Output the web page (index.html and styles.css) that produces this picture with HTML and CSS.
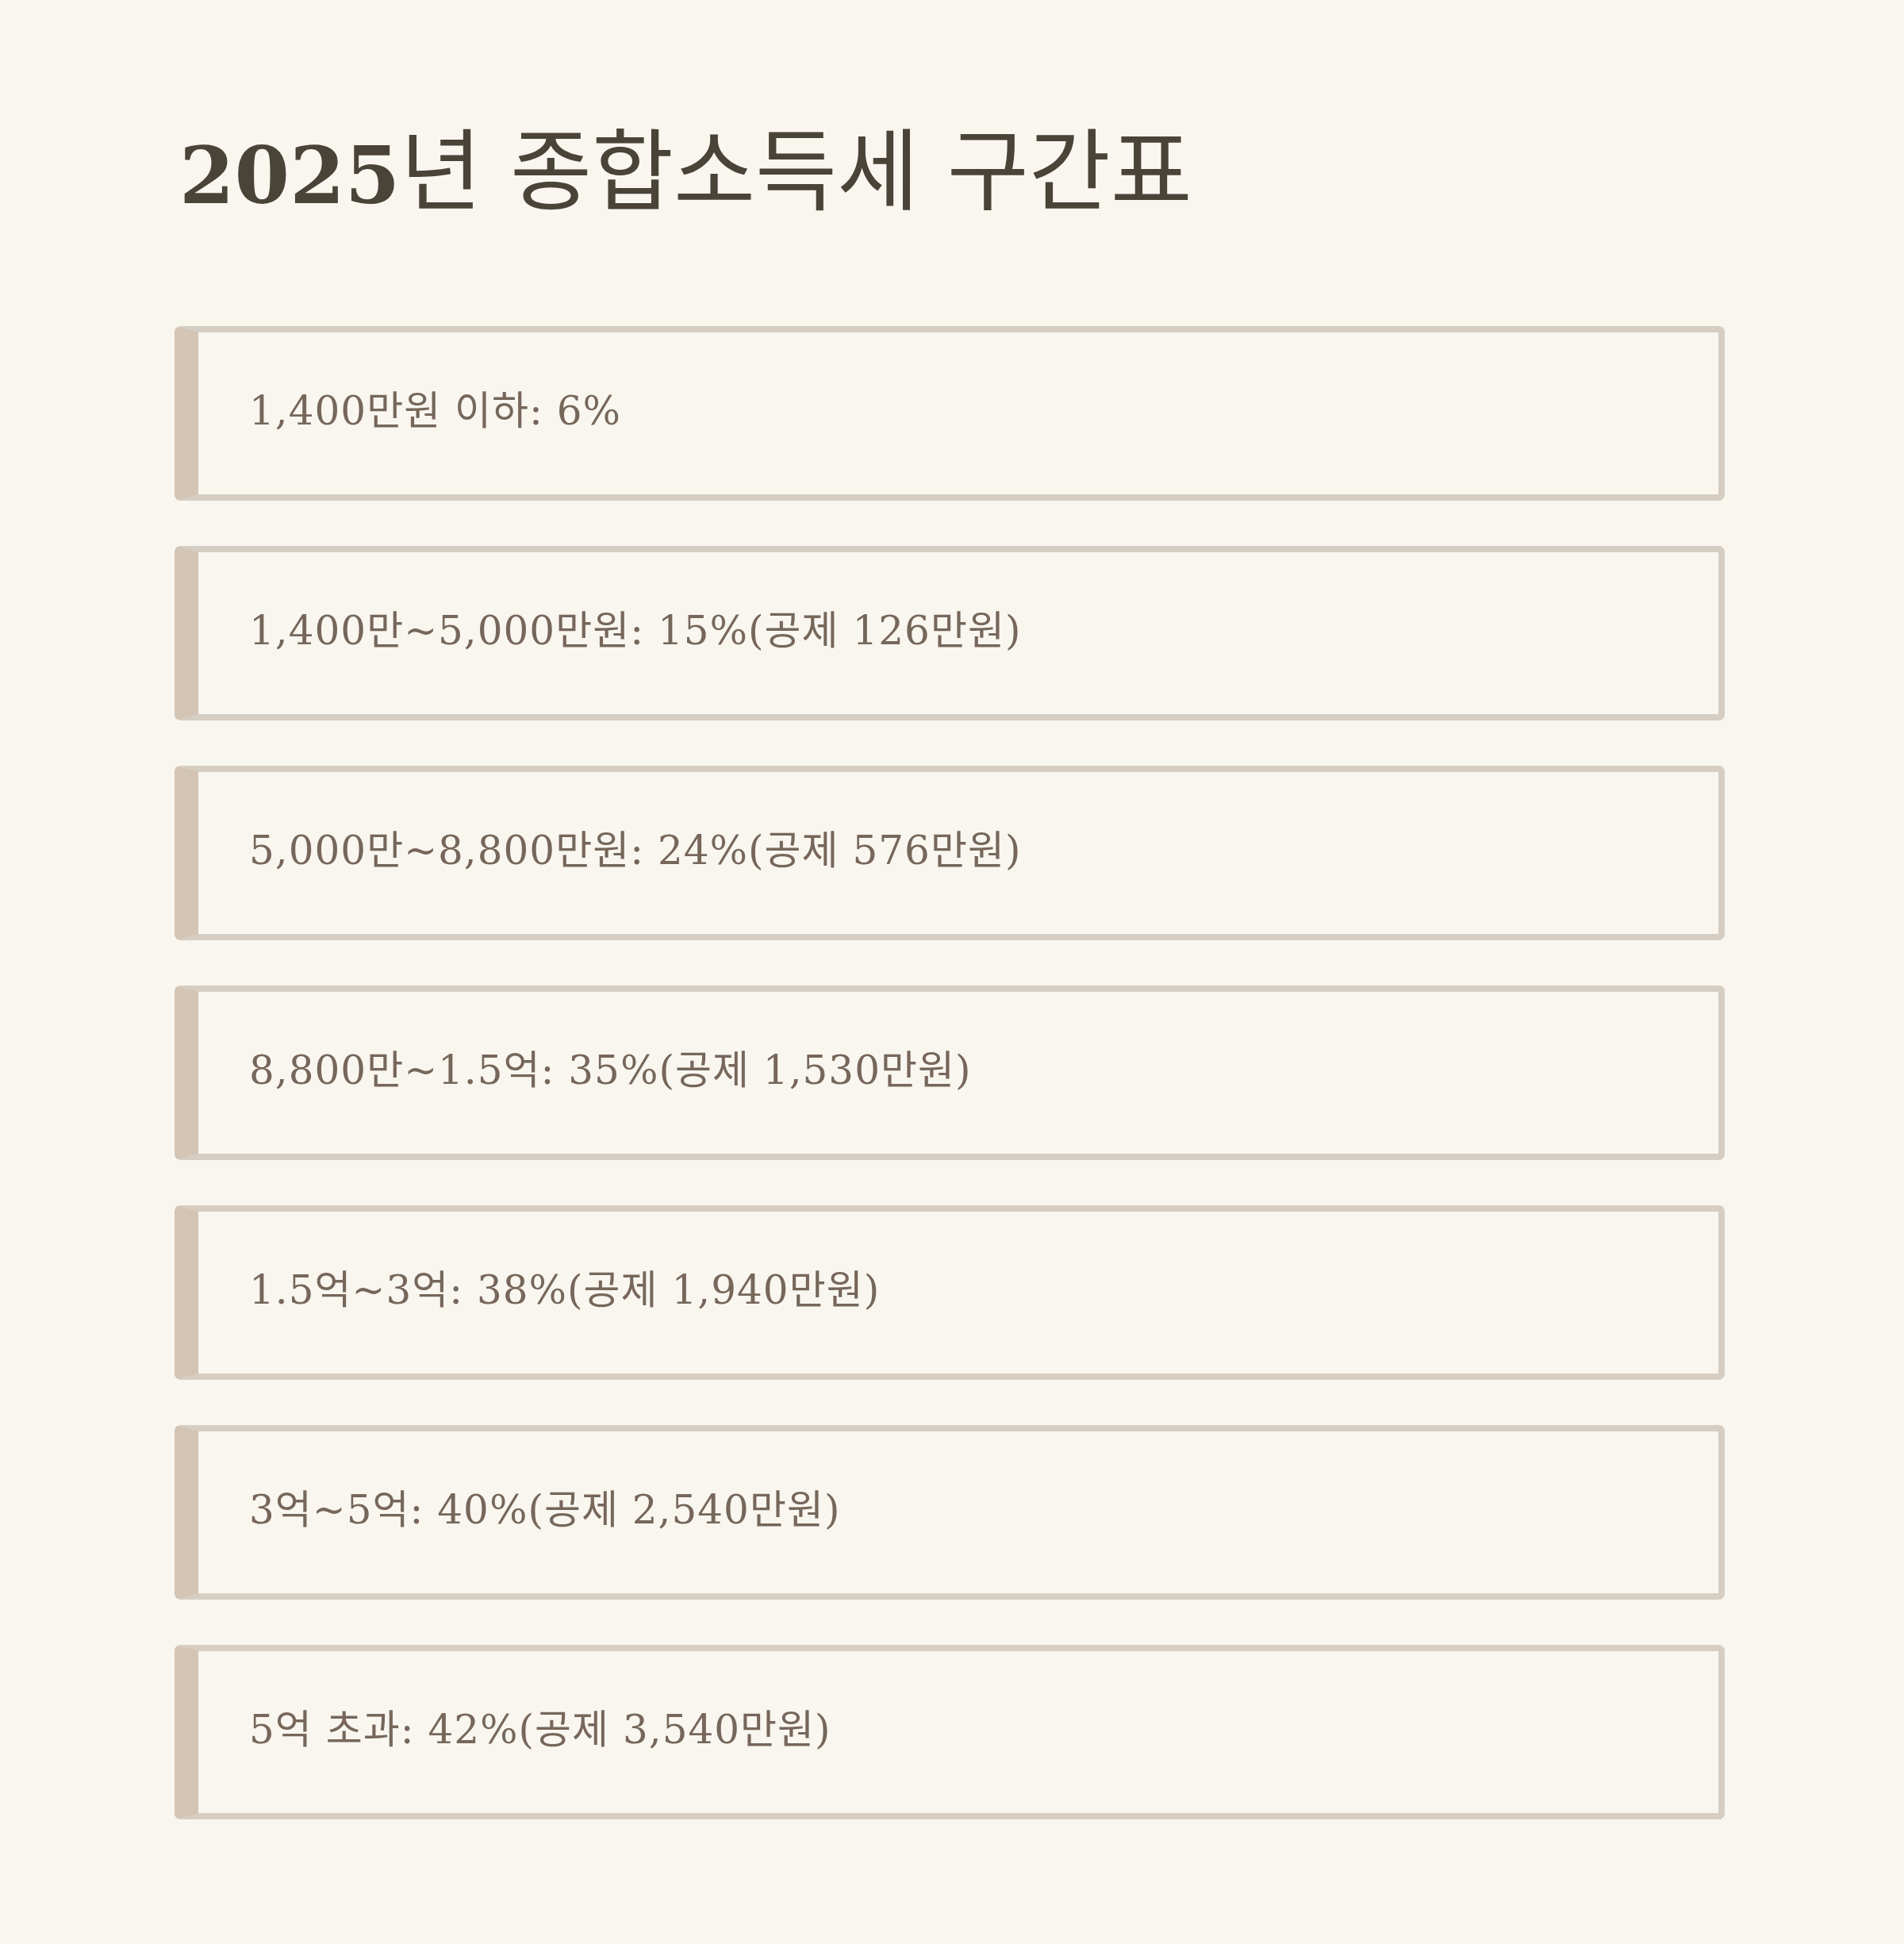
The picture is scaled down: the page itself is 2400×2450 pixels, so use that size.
FILE: index.html
```html
<!DOCTYPE html>
<html lang="ko">
<head>
<meta charset="utf-8">
<title>2025년 종합소득세 구간표</title>
<link rel="stylesheet" href="styles.css">
</head>
<body>
<main class="page">
  <h1 class="title"><span class="title-num">2025</span>년 종합소득세 구간표</h1>
  <ul class="brackets">
    <li class="bracket">1,400만원 이하: 6%</li>
    <li class="bracket">1,400만~5,000만원: 15%(공제 126만원)</li>
    <li class="bracket">5,000만~8,800만원: 24%(공제 576만원)</li>
    <li class="bracket">8,800만~1.5억: 35%(공제 1,530만원)</li>
    <li class="bracket">1.5억~3억: 38%(공제 1,940만원)</li>
    <li class="bracket">3억~5억: 40%(공제 2,540만원)</li>
    <li class="bracket">5억 초과: 42%(공제 3,540만원)</li>
  </ul>
</main>
</body>
</html>
```
FILE: styles.css
```css
html, body {
  margin: 0;
  padding: 0;
  background: #f9f6f0;
}
.page {
  padding: 150px 226px 100px 220px;
  font-family: "DejaVu Serif", "Noto Sans CJK KR", serif;
  font-variant-numeric: oldstyle-nums;
}
.title {
  margin: 0 0 123px 0;
  font-size: 112px;
  line-height: 134px;
  font-weight: 400;
  color: #4a4337;
  padding-left: 6px;
}
.title-num {
  font-weight: 700;
  font-size: 100px;
}
.brackets {
  list-style: none;
  margin: 0;
  padding: 0;
  display: flex;
  flex-direction: column;
  gap: 57px;
}
.bracket {
  box-sizing: border-box;
  height: 220px;
  display: flex;
  align-items: center;
  padding: 0 64px 16px 64px;
  border: 8px solid #d6cec2;
  border-left: 30px solid #d3c4b4;
  border-radius: 8px;
  font-size: 50px;
  letter-spacing: 1px;
  color: #76675a;
}
```
